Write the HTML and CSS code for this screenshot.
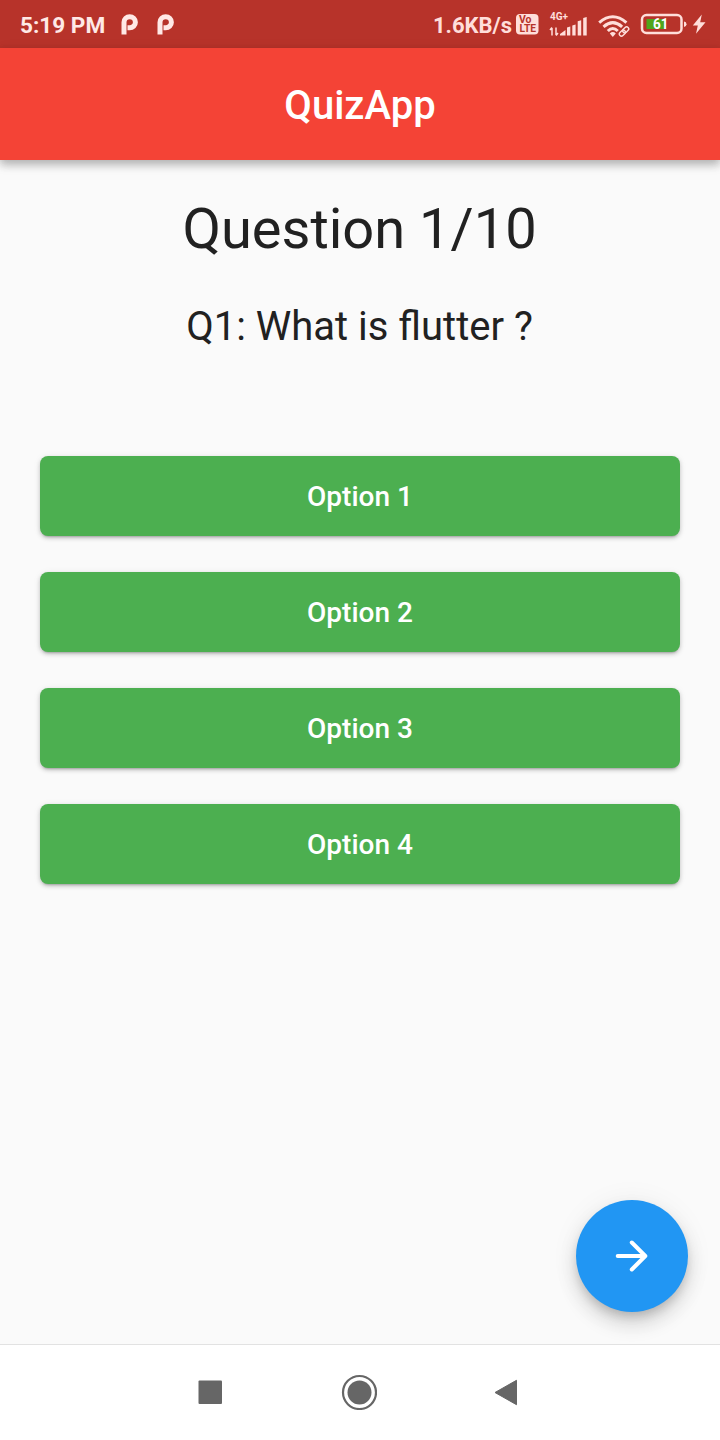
FILE: index.html
```html
<!DOCTYPE html>
<html lang="en">
<head>
<meta charset="utf-8">
<title>QuizApp</title>
<link rel="stylesheet" href="styles.css">
</head>
<body>
<div class="screen">
  <div class="status-bar">
    <span class="clock">5:19 PM</span>
    <svg class="notice" width="18" height="22" viewBox="0 0 18 22"><path d="M3 21.500V9.200a5.700 5.500 0 1 1 5.700 5.500H6.500" fill="none" stroke="currentColor" stroke-width="5"/></svg>
    <svg class="notice" width="18" height="22" viewBox="0 0 18 22"><path d="M3 21.500V9.200a5.700 5.500 0 1 1 5.700 5.500H6.500" fill="none" stroke="currentColor" stroke-width="5"/></svg>
    <span class="speed">1.6KB/s</span>
    <svg class="volte" width="24" height="22" viewBox="0 0 24 22">
      <rect x="0" y="1" width="22.500" height="20.500" rx="4" fill="currentColor"/>
      <text class="volte-text" x="3" y="10" textLength="12.500" lengthAdjust="spacingAndGlyphs">Vo</text>
      <text class="volte-text" x="3.500" y="19" textLength="16.500" lengthAdjust="spacingAndGlyphs">LTE</text>
    </svg>
    <svg class="signal" width="40" height="28" viewBox="0 0 40 28">
      <text class="network-text" x="1" y="9.500" textLength="18" lengthAdjust="spacingAndGlyphs">4G+</text>
      <path d="M3 25.500v-7.500M1 20l2-2.500M7 17.500v7.500M9 23l-2 2.500" fill="none" stroke="currentColor" stroke-width="1.500"/>
      <path d="M11 25.500v-1.500l5.500-4v5.500zM18 25.500v-8l3.300-1v9zM23.300 25.500v-10l3.300-1v11zM28.700 25.500V11.200l3.500-1v15.300zM34.200 25.500V8l3.500-1v18.500z" fill="currentColor"/>
    </svg>
    <svg class="wifi" width="34" height="28" viewBox="0 0 34 28">
      <g fill="none" stroke="currentColor" stroke-width="3">
        <path d="M1.200 12.600Q14.800 1 28.400 12.600"/>
        <path d="M5.500 16.800Q14.800 8.500 24.100 16.800"/>
        <path d="M9.800 21Q14.800 16 19.800 21"/>
      </g>
      <path d="M11.800 23.500Q14.800 20.700 17.800 23.500L14.800 27z" fill="currentColor"/>
      <g fill="none" stroke="currentColor" stroke-width="1.400" transform="rotate(-45 26 21.500)">
        <rect x="20.300" y="19.400" width="6.800" height="4.200" rx="2.100"/>
        <rect x="25" y="19.400" width="6.800" height="4.200" rx="2.100"/>
      </g>
    </svg>
    <svg class="battery" width="48" height="24" viewBox="0 0 48 24">
      <rect x="2" y="3" width="39.500" height="18" rx="4.500" fill="none" stroke="currentColor" stroke-width="2.500"/>
      <rect x="6.500" y="7" width="18" height="10" fill="#50a51b"/>
      <path d="M44 9.500q2.500 .3 2.500 2.700t-2.500 2.700z" fill="currentColor"/>
      <text class="battery-text" x="13" y="17" textLength="15.500" lengthAdjust="spacingAndGlyphs">61</text>
    </svg>
    <svg class="bolt" width="14" height="20" viewBox="0 0 14 20"><path d="M9.800 0.500L0.800 11.500h5L4 19.700L13.500 8.200H8.200z" fill="currentColor"/></svg>
  </div>
  <header class="app-bar"><h1 class="app-title">QuizApp</h1></header>
  <main class="quiz">
    <h2 class="progress">Question 1/10</h2>
    <p class="question">Q1: What is flutter ?</p>
    <div class="options">
      <button class="option">Option 1</button>
      <button class="option">Option 2</button>
      <button class="option">Option 3</button>
      <button class="option">Option 4</button>
    </div>
    <button class="next" aria-label="Next question">
      <svg width="48" height="48" viewBox="0 0 48 48"><path d="M9.700 24H37M23.800 10.500L37.300 24L23.800 37.500" fill="none" stroke="#fff" stroke-width="4" stroke-linecap="round" stroke-linejoin="round"/></svg>
    </button>
  </main>
  <nav class="nav-bar">
    <svg width="36" height="36" viewBox="0 0 36 36"><rect x="6.500" y="6.500" width="23.500" height="23.500" rx="1" fill="currentColor"/></svg>
    <svg width="36" height="36" viewBox="0 0 36 36"><circle cx="18.500" cy="18.500" r="16.500" fill="none" stroke="currentColor" stroke-width="2.200"/><circle cx="18.500" cy="18.500" r="12" fill="currentColor"/></svg>
    <svg width="36" height="36" viewBox="0 0 36 36"><path d="M5 18.500L26.500 6.300V30.700z" fill="currentColor" stroke="currentColor" stroke-linejoin="round"/></svg>
  </nav>
</div>
</body>
</html>
```
FILE: styles.css
```css
* { box-sizing: border-box; }

body {
  margin: 0;
  font-family: Roboto, "Liberation Sans", sans-serif;
  color: #212121;
}

h1, h2, p { margin: 0; font-weight: 400; }
svg { display: block; flex: none; }

.screen {
  width: 720px;
  height: 1440px;
  display: flex;
  flex-direction: column;
  background: #fafafa;
}

.status-bar {
  height: 48px;
  flex: none;
  display: flex;
  align-items: center;
  padding: 0 14px 0 20px;
  background: #b7332a;
  color: #ffdeda;
}

.clock { width: 86px; font-size: 22.6px; font-weight: 700; line-height: 28px; white-space: nowrap; padding-top: 3px; color: #ffe9e6; }
.notice { margin-left: 15px; color: #ffe9e6; }
.notice + .notice { margin-left: 18px; }
.speed { margin-left: auto; font-size: 22px; font-weight: 700; line-height: 28px; padding-top: 3px; }
.volte { margin-left: 4px; }
.volte-text { font-size: 10px; font-weight: 700; fill: #b7332a; }
.signal { margin-left: 9px; }
.network-text { font-size: 10px; font-weight: 700; fill: currentColor; }
.wifi { margin-left: 9px; }
.battery { margin-left: 8px; }
.battery-text { font-size: 14px; font-weight: 700; fill: #fff; }
.bolt { margin-left: 4px; }

.app-bar {
  height: 112px;
  flex: none;
  display: flex;
  align-items: center;
  justify-content: center;
  padding: 4px 0 0;
  background: #f44336;
  box-shadow: 0 4px 8px rgba(0, 0, 0, .18), 0 6px 10px rgba(0, 0, 0, .1), 0 2px 14px rgba(0, 0, 0, .06);
}

.app-title { color: #fff; font-size: 40px; font-weight: 500; line-height: 48px; }

.quiz {
  flex: 1;
  display: flex;
  flex-direction: column;
  padding: 36px 32px 32px 40px;
}

.progress { margin-right: 9px; text-align: center; font-size: 56px; line-height: 66px; }
.question { margin: 41px 9px 0 0; text-align: center; font-size: 40px; line-height: 48px; }

.options {
  margin: 105px 8px 0 0;
  display: flex;
  flex-direction: column;
  gap: 36px;
}

.option {
  height: 80px;
  padding: 2px 0 0;
  border: 0;
  border-radius: 8px;
  background: #4caf50;
  color: #fff;
  font: 500 28px/32px Roboto, "Liberation Sans", sans-serif;
  box-shadow: 0 3px 2px -2px rgba(0, 0, 0, .18), 0 2px 4px rgba(0, 0, 0, .2), 0 1px 8px rgba(0, 0, 0, .06);
}

.next {
  width: 112px;
  height: 112px;
  margin: auto 0 0 auto;
  padding: 0;
  border: 0;
  border-radius: 50%;
  display: flex;
  align-items: center;
  justify-content: center;
  background: #2196f3;
  box-shadow: 0 6px 10px -2px rgba(0, 0, 0, .16), 0 12px 20px rgba(0, 0, 0, .14), 0 2px 30px rgba(0, 0, 0, .06);
}

.nav-bar {
  height: 96px;
  flex: none;
  display: flex;
  justify-content: center;
  gap: 113px;
  padding: 29px 2px 0 0;
  border-top: 1px solid #e2e2e2;
  background: #fff;
  color: #666;
}
```
